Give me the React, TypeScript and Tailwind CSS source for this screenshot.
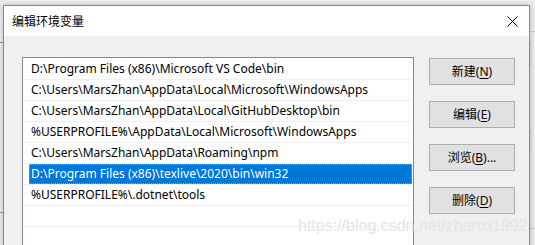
import React from "react";

const rows = [
  "D:\\Program Files (x86)\\Microsoft VS Code\\bin",
  "C:\\Users\\MarsZhan\\AppData\\Local\\Microsoft\\WindowsApps",
  "C:\\Users\\MarsZhan\\AppData\\Local\\GitHubDesktop\\bin",
  "%USERPROFILE%\\AppData\\Local\\Microsoft\\WindowsApps",
  "C:\\Users\\MarsZhan\\AppData\\Roaming\\npm",
  "D:\\Program Files (x86)\\texlive\\2020\\bin\\win32",
  "%USERPROFILE%\\.dotnet\\tools",
  "",
  "",
];

const buttons: { label: string; key: string; tail?: string }[] = [
  { label: "新建", key: "N" },
  { label: "编辑", key: "E" },
  { label: "浏览", key: "B", tail: "..." },
  { label: "删除", key: "D" },
];

const font = {
  fontFamily: '"Noto Sans", "Noto Sans CJK SC", sans-serif',
};

export default function App() {
  return (
    <div
      className="relative w-[535px] h-[245px] overflow-hidden bg-[#f0f0f0] text-[12px] text-black"
      style={font}
    >
      {/* background window fragments */}
      <div className="absolute left-0 top-0 w-[3px] h-full bg-[#f0f0f0]">
        <div className="absolute left-0 top-[42px] w-[3px] h-px bg-[#999]" />
        <div className="absolute left-0 top-[212px] w-[3px] h-px bg-[#999]" />
      </div>
      <div className="absolute right-0 top-0 w-[6px] h-full bg-[#ececec]">
        <div className="absolute left-0 top-[31px] w-full h-px bg-[#d0d0d0]" />
        <div className="absolute left-[1px] top-[42px] w-px h-[24px] bg-[#d8d8d8]" />
        <div className="absolute left-[1px] top-[130px] w-px h-[22px] bg-[#d8d8d8]" />
        <div className="absolute left-0 top-[228px] w-full h-px bg-[#c8c8c8]" />
      </div>

      {/* dialog window */}
      <div className="absolute left-[3px] top-[5px] w-[527px] h-[260px] border border-[#8a8a8a] bg-[#f0f0f0] flex flex-col shadow-[0_0_6px_rgba(0,0,0,0.25)]">
        <div className="h-[30px] bg-white flex items-center justify-between pl-[8px] pr-[10px] shrink-0">
          <span className="text-[12px] leading-none" style={{ fontFamily: '"Noto Sans CJK SC", sans-serif' }}>
            编辑环境变量
          </span>
          <svg width="11" height="11" viewBox="0 0 11 11" className="mr-[1px]">
            <path d="M0.5 0.5 L10.5 10.5 M10.5 0.5 L0.5 10.5" stroke="#000" strokeWidth="1" fill="none" />
          </svg>
        </div>

        <div className="flex pt-[21px] pl-[18px] pr-[13px] gap-[15px]">
          <div className="w-[392px] h-[200px] border border-[#828790] bg-white pl-[1px] pr-[1px] pt-px">
            {rows.map((r, i) => {
              const sel = i === 5;
              return (
                <div key={i} className="h-[21px] flex flex-col">
                  <div className="h-[20px] flex">
                    <div className="w-[5px]" />
                    <div
                      className={
                        sel
                          ? "flex-1 flex items-center pl-[2px] bg-[#0078d7] text-white outline-1 outline-dotted outline-[#ff8728] -outline-offset-1"
                          : "flex-1 flex items-center pl-[2px]"
                      }
                    >
                      <span className="whitespace-nowrap leading-none">{r}</span>
                    </div>
                  </div>
                  <div className="h-px bg-[#f0f0f0] ml-0" />
                </div>
              );
            })}
          </div>

          <div className="flex flex-col gap-[16px] pt-px">
            {buttons.map((b) => (
              <div
                key={b.key}
                className="w-[86px] h-[27px] border border-[#adadad] bg-[#e1e1e1] flex items-center justify-center"
              >
                <span className="leading-none whitespace-nowrap">
                  <span style={{ fontFamily: '"Noto Sans CJK SC", sans-serif' }}>{b.label}</span>
                  (<span className="underline underline-offset-2">{b.key}</span>){b.tail ?? ""}
                </span>
              </div>
            ))}
          </div>
        </div>
      </div>

      {/* watermark */}
      <div
        className="absolute left-[298px] top-[216px] text-[16px] leading-[20px] text-[#e4e4e4] whitespace-nowrap pointer-events-none"
        style={{ fontFamily: '"Liberation Sans", sans-serif' }}
      >
        https://blog.csdn.net/zhanxi1992
      </div>
    </div>
  );
}
